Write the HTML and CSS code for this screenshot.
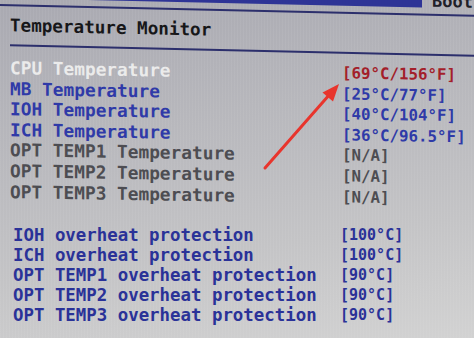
FILE: index.html
```html
<!DOCTYPE html>
<html lang="en">
<head>
  <meta charset="UTF-8">
  <meta name="viewport" content="width=device-width,initial-scale=1.0">
  <title>Temperature Monitor</title>
  <link rel="stylesheet" href="styles.css">
</head>
<body>
  <div class="screen">
    <!-- menu bar + page title -->
    <div class="head">
      <div class="menubar">
        <div class="menu-active"></div>
        <div class="menu-next">Boot</div>
      </div>
      <div class="rule"></div>
      <h1 class="title">Temperature Monitor</h1>
      <div class="rule rule-inset"></div>
    </div>

    <!-- live readings -->
    <div class="readings">
      <div class="label sel">CPU Temperature</div><div class="value hot">[69°C/156°F]</div>
      <div class="label">MB Temperature</div><div class="value">[25°C/77°F]</div>
      <div class="label">IOH Temperature</div><div class="value">[40°C/104°F]</div>
      <div class="label">ICH Temperature</div><div class="value">[36°C/96.5°F]</div>
      <div class="label off">OPT TEMP1 Temperature</div><div class="value off">[N/A]</div>
      <div class="label off">OPT TEMP2 Temperature</div><div class="value off">[N/A]</div>
      <div class="label off">OPT TEMP3 Temperature</div><div class="value off">[N/A]</div>
    </div>

    <!-- protection limits -->
    <div class="limits">
      <div class="label">IOH overheat protection</div><div class="value">[100°C]</div>
      <div class="label">ICH overheat protection</div><div class="value">[100°C]</div>
      <div class="label">OPT TEMP1 overheat protection</div><div class="value">[90°C]</div>
      <div class="label">OPT TEMP2 overheat protection</div><div class="value">[90°C]</div>
      <div class="label">OPT TEMP3 overheat protection</div><div class="value">[90°C]</div>
    </div>

    <!-- red pointer drawn over the photo -->
    <svg class="arrow" viewBox="0 0 474 338" width="474" height="338">
      <line x1="265" y1="168" x2="330" y2="94" stroke="#e8352d" stroke-width="3" stroke-linecap="round"/>
      <polygon points="339,84 333,101.5 322.5,92.5" fill="#e8352d"/>
    </svg>
  </div>
</body>
</html>
```

FILE: styles.css
```css
* { margin:0; padding:0; box-sizing:border-box; }
body {
  width:474px; height:338px; overflow:hidden;
  background:#bcbcc0;
  font-family:"DejaVu Sans Mono", "Liberation Mono", monospace;
  font-weight:bold;
}
.screen {
  position:relative;
  width:474px; height:338px; overflow:hidden;
  background:
    repeating-linear-gradient(90deg, rgba(255,255,255,0.05) 0 1px, transparent 1px 3px),
    linear-gradient(172deg, #a9a9b1 0%, #b7b7bc 35%, #c4c4c6 70%, #d2d2d2 100%);
}

/* header: tilted like the photo */
.head {
  margin-top:-16px;
  transform:skewY(1.3deg); transform-origin:0 0;
}
.menubar { display:flex; height:14px; margin-bottom:6px; }
.menu-active { width:422px; background:#2e3496; }
.menu-next {
  flex:1; padding-left:10px;
  font-size:17px; line-height:14px; color:#202028;
  overflow:hidden;
}
.rule { height:2px; background:#2c2f6c; }
.rule-inset { margin-left:10px; }
.title {
  margin:9px 0 9px 10px;
  font-size:17.6px; line-height:20px; font-weight:bold;
  color:#171719;
}

/* rows */
.label, .value { white-space:nowrap; }
.readings {
  display:grid; grid-template-columns:332px auto;
  margin-top:12px; padding-left:10px;
  font-size:17.8px; line-height:20.6px;
  color:#2f3aa8;
  transform:skewY(0.9deg); transform-origin:0 0;
}
.readings .value { font-size:15.8px; }
.sel { color:#ebebeb; }
.hot { color:#a31f2b; }
.off { color:#4d4d52; }

.limits {
  display:grid; grid-template-columns:327px auto;
  margin-top:23px; padding-left:13px;
  font-size:17.4px; line-height:20px;
  color:#2a3298;
}
.limits .value { font-size:15px; }

.arrow {
  position:absolute; top:0; left:0;
  pointer-events:none;
}
```
